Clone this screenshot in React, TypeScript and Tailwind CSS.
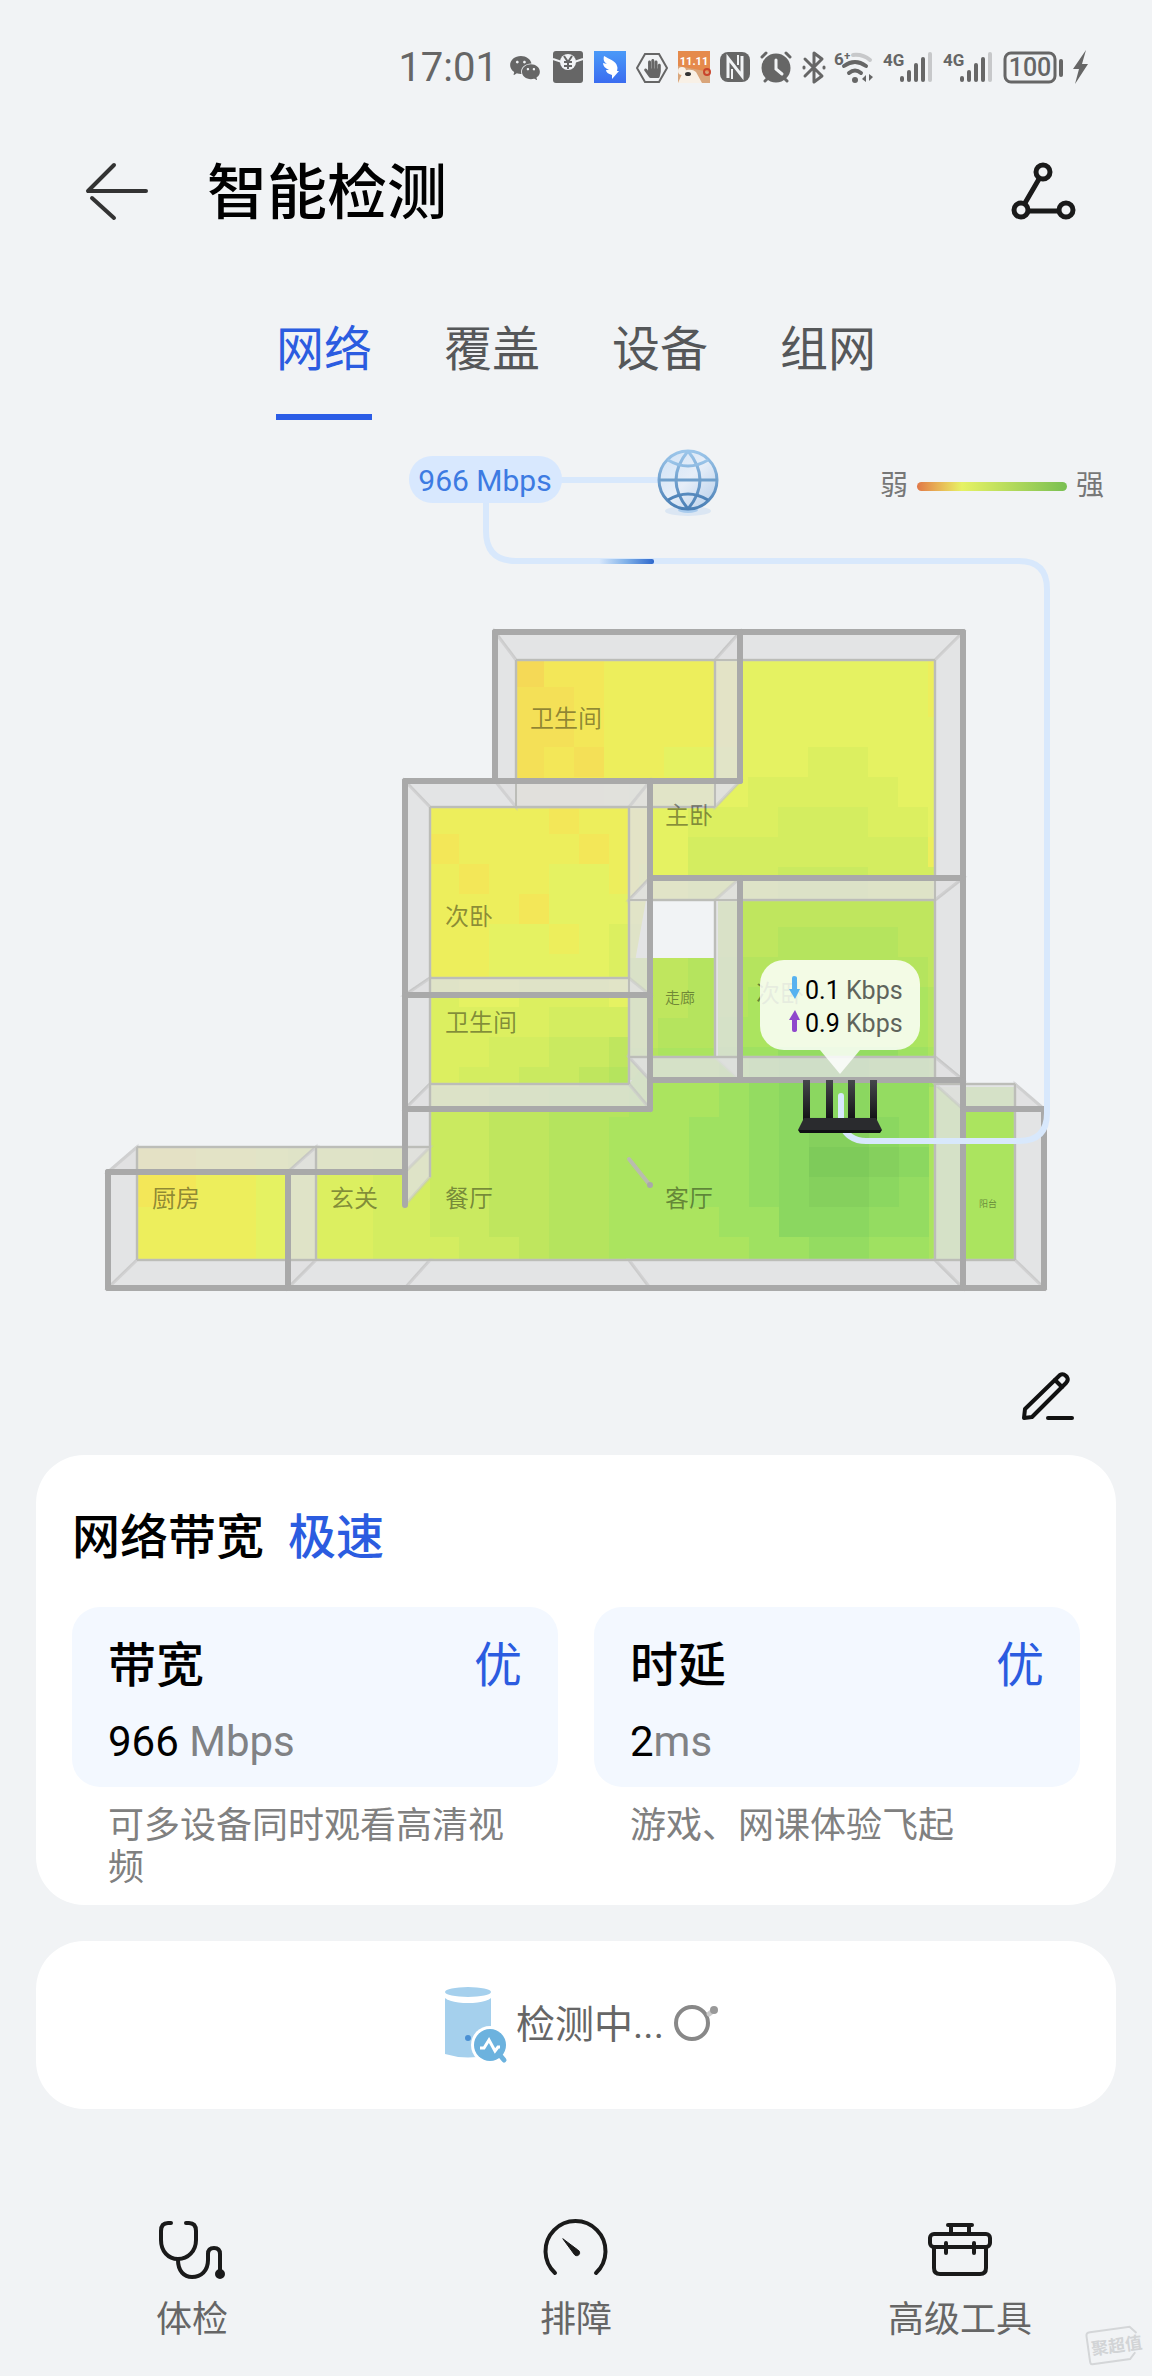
import React, { useState } from "react";
import { AiFillWechat } from "react-icons/ai";
import { FaHandPaper } from "react-icons/fa";

// Signal levels, weakest to strongest
const LEVELS: Record<string, string> = {
  "0": "#f5d956",
  "1": "#f4e057",
  "2": "#f3e758",
  "3": "#edee5c",
  "4": "#e5f262",
  "5": "#dcef60",
  "6": "#d4ed60",
  "7": "#caea60",
  "8": "#bfe65e",
  "9": "#b5e45e",
  a: "#abe45f",
  b: "#9fe161",
  c: "#94dc61",
  d: "#8bd760",
  e: "#85d05d",
  f: "#7ecb5a",
};

const CELL = 30;

// Each room has its own sampling grid, cut to the outline of its floor
const rooms = [
  {
    id: "bath-top",
    outline: "516,660 740,660 740,807 516,807",
    x: 514,
    y: 657,
    rows: ["02233333", "11233333", "11233333", "12133444", "12233344", "12233344"],
  },
  {
    id: "master",
    outline: "740,660 935,660 935,900 629,900 629,781 740,781",
    x: 628,
    y: 657,
    rows: [
      "44444444443",
      "44444444443",
      "44444444444",
      "44444455444",
      "44445555544",
      "44555666554",
      "44666666663",
      "44666777666",
      "44666777666",
    ],
  },
  {
    id: "bedroom-left",
    outline: "430,807 629,807 650,781 650,878 629,995 430,995",
    x: 429,
    y: 774,
    rows: ["33332333", "33332333", "23333233", "32334434", "33324444", "33443455", "33444455", "23334555"],
  },
  {
    id: "bath-left",
    outline: "430,978 629,978 629,1109 430,1109",
    x: 429,
    y: 977,
    rows: ["5445554", "5555666", "5566778", "5667789", "6778899"],
  },
  {
    id: "corridor",
    outline: "629,958 715,958 715,1080 629,1080",
    x: 628,
    y: 958,
    rows: ["889", "889", "899", "9aa", "aaa"],
  },
  {
    id: "bedroom-right",
    outline: "715,900 935,900 935,1080 715,1080",
    x: 718,
    y: 867,
    rows: ["88888888", "88888888", "88999988", "99999998", "9aaaaaa9", "aaaaaaa9", "bbccccba", "bbccccba"],
  },
  {
    id: "entrance",
    outline: "288,1147 430,1147 430,1260 288,1260",
    x: 283,
    y: 1147,
    rows: ["55566", "55566", "55566", "55566"],
  },
  {
    id: "kitchen",
    outline: "137,1147 288,1147 288,1260 137,1260",
    x: 136,
    y: 1147,
    rows: ["223344", "223344", "333344", "333344"],
  },
  {
    id: "dining",
    outline: "430,1084 629,1084 629,1260 430,1260",
    x: 429,
    y: 1087,
    rows: ["7788999", "778899a", "778899a", "778899a", "778899a", "677899a"],
  },
  {
    id: "living",
    outline: "629,1084 650,1057 935,1057 935,1260 629,1260",
    x: 629,
    y: 1057,
    rows: [
      "aaabcdddccb",
      "aaabcdddcca",
      "aabbcdeedca",
      "aabbcdffeda",
      "aabbcdeedca",
      "aaabbdddcca",
      "aaaabbccbba",
    ],
  },
  {
    id: "living-right",
    outline: "935,1084 963,1084 963,1260 935,1260",
    x: 935,
    y: 1087,
    rows: ["a", "a", "a", "a", "a", "a"],
  },
  {
    id: "balcony",
    outline: "963,1084 1015,1084 1015,1260 963,1260",
    x: 928,
    y: 1087,
    rows: ["aaa99", "aaa99", "aaa99", "aaa99", "aaaaa", "aaaaa"],
  },
];

// Where the top edge of a wall meets the floor, per axis
const FOOT_X: Record<number, number> = {
  108: 137, 288: 316, 405: 430, 495: 516, 650: 629, 740: 715, 963: 935, 1044: 1015,
};
const FOOT_Y: Record<number, number> = {
  632: 660, 781: 807, 878: 900, 995: 978, 1080: 1057, 1109: 1084, 1172: 1147, 1205: 1177, 1288: 1260,
};

const walls = [
  [495, 632, 740, 632],
  [740, 632, 963, 632],
  [495, 632, 495, 781],
  [740, 632, 740, 781],
  [963, 632, 963, 878],
  [963, 878, 963, 1080],
  [405, 781, 650, 781],
  [495, 781, 740, 781],
  [405, 781, 405, 995],
  [650, 781, 650, 878],
  [650, 878, 963, 878],
  [650, 878, 650, 1080],
  [650, 1080, 650, 1109],
  [740, 878, 740, 1080],
  [405, 995, 650, 995],
  [405, 995, 405, 1109],
  [650, 1080, 963, 1080],
  [405, 1109, 650, 1109],
  [405, 1109, 405, 1205],
  [963, 1080, 963, 1288],
  [963, 1109, 1044, 1109],
  [1044, 1109, 1044, 1288],
  [108, 1172, 288, 1172],
  [288, 1172, 405, 1172],
  [108, 1172, 108, 1288],
  [288, 1172, 288, 1288],
  [108, 1288, 288, 1288],
  [288, 1288, 405, 1288],
  [405, 1288, 650, 1288],
  [650, 1288, 963, 1288],
  [963, 1288, 1044, 1288],
];

const roomLabels = [
  { text: "卫生间", x: 530, y: 727, size: 24 },
  { text: "主卧", x: 665, y: 824, size: 24 },
  { text: "次卧", x: 445, y: 925, size: 24 },
  { text: "卫生间", x: 445, y: 1031, size: 24 },
  { text: "走廊", x: 665, y: 1003, size: 15 },
  { text: "次卧", x: 756, y: 1002, size: 24 },
  { text: "厨房", x: 152, y: 1207, size: 24 },
  { text: "玄关", x: 330, y: 1207, size: 24 },
  { text: "餐厅", x: 445, y: 1207, size: 24 },
  { text: "客厅", x: 665, y: 1207, size: 24 },
  { text: "阳台", x: 979, y: 1207, size: 9 },
];

const tabs = ["网络", "覆盖", "设备", "组网"];

function SignalBars() {
  return (
    <svg className="overflow-visible" width="50" height="36" viewBox="0 0 50 36" fill="currentColor">
      <text x="0" y="16" fontSize="17" fontWeight="700">
        4G
      </text>
      <rect x="17" y="26" width="4" height="6" rx="2" />
      <rect x="24" y="20" width="4" height="12" rx="2" />
      <rect x="31" y="13" width="4" height="19" rx="2" />
      <rect x="38" y="7" width="4" height="25" rx="2" />
      <rect x="45" y="2" width="4" height="30" rx="2" opacity="0.3" />
    </svg>
  );
}

function StatusBar() {
  return (
    <div className="flex h-[136px] items-center justify-end gap-[10px] pr-16 text-[#666]">
      <span className="text-[40px] leading-none">17:01</span>
      <AiFillWechat size={34} />
      <svg width="32" height="36" viewBox="0 0 32 36">
        <rect x="1" y="1" width="30" height="32" rx="3" fill="#666" />
        <path d="M1 9 L10 12 A7 7 0 0 0 22 12 L31 9" fill="none" stroke="#f1f3f5" strokeWidth="2" />
        <circle cx="16" cy="12" r="8" fill="#f1f3f5" />
        <path d="M12 6 L16 12 L20 6 M16 12 V19 M12 12 H20 M12 16 H20" stroke="#666" strokeWidth="2" fill="none" />
      </svg>
      <svg width="32" height="36" viewBox="0 0 32 36">
        <defs>
          <linearGradient id="bird" x1="0" y1="0" x2="0" y2="1">
            <stop offset="0" stopColor="#4a9af8" />
            <stop offset="1" stopColor="#3a6cf0" />
          </linearGradient>
        </defs>
        <rect y="1" width="32" height="32" fill="url(#bird)" />
        <path d="M10 6 C15 9 22 11 23 16 C24 18 23 20 23 21 H25 L18 29 L18 25 C14 24 12 22 12 20 H15 C11 18 9 16 9 13 L13 14 C10 12 9 10 10 6 Z" fill="#fff" />
      </svg>
      <span className="relative flex size-8 items-center justify-center">
        <svg className="absolute inset-0" width="32" height="32" viewBox="0 0 32 32">
          <path d="M9 2 H23 L31 16 L23 30 H9 L1 16 Z" fill="none" stroke="currentColor" strokeWidth="2" />
        </svg>
        <FaHandPaper size={19} />
      </span>
      <svg className="overflow-visible" width="32" height="36" viewBox="0 0 32 36">
        <rect y="1" width="32" height="32" fill="#e58a4c" />
        <path d="M0 33 V16 L32 22 V33 Z" fill="#d9a57a" />
        <text x="16" y="15" textAnchor="middle" fontSize="11" fontWeight="700" fill="#fff">
          11.11
        </text>
        <path d="M0 33 L4 24 A8 6 0 0 1 18 22 L24 33 Z" fill="#f8f0e6" />
        <circle cx="4" cy="21" r="4" fill="#f8f0e6" />
        <ellipse cx="10" cy="24" rx="3" ry="2" fill="#333" />
        <circle cx="29" cy="22" r="3" fill="none" stroke="#c9452c" strokeWidth="2" />
      </svg>
      <svg width="30" height="36" viewBox="0 0 30 36">
        <rect y="2" width="30" height="30" rx="8" fill="#666" />
        <path d="M8 28 V8 L22 26 V6" fill="none" stroke="#f1f3f5" strokeWidth="3" />
        <path d="M12 19 V29 M18 5 V15" stroke="#f1f3f5" strokeWidth="2" />
      </svg>
      <svg width="32" height="36" viewBox="0 0 32 36" fill="none" stroke="#666" strokeWidth="3" strokeLinecap="round">
        <circle cx="16" cy="18" r="13" fill="#666" />
        <path d="M2 7 L6 3 M30 7 L26 3 M5 31 L8 28 M27 31 L24 28" />
        <path d="M16 10 V19 L22 24" stroke="#f1f3f5" />
      </svg>
      <svg width="24" height="36" viewBox="0 0 24 36" fill="none" stroke="#666" strokeWidth="3" strokeLinejoin="round" strokeLinecap="round">
        <path d="M3 9 L20 26 L12 32 V3 L20 9 L3 26" />
        <path d="M2 17 V18 M22 17 V18" />
      </svg>
      <svg className="overflow-visible" width="37" height="36" viewBox="0 0 37 36" fill="none" stroke="#666" strokeWidth="4" strokeLinecap="round">
        <text x="-2" y="15" fontSize="17" fontWeight="700" fill="#666" stroke="none">
          6⁺
        </text>
        <path d="M17 5 Q27 4 34 10" opacity="0.3" />
        <path d="M8 16 Q19 8 30 16" />
        <path d="M13 23 Q19 18 25 23" />
        <circle cx="19" cy="30" r="3" fill="#666" stroke="none" />
        <path d="M30 25 V32 L26 29 Z M33 24 V31 L37 27 Z" fill="#666" stroke="none" />
      </svg>
      <SignalBars />
      <SignalBars />
      <svg width="60" height="36" viewBox="0 0 60 36" fill="none" stroke="#666">
        <rect x="2" y="3" width="50" height="29" rx="6" strokeWidth="3" />
        <path d="M58 11 V25" strokeWidth="4" strokeLinecap="round" />
        <text x="27" y="26" textAnchor="middle" fontSize="25" fontWeight="500" fill="#666" stroke="none">
          100
        </text>
      </svg>
      <svg width="15" height="36" viewBox="0 0 15 36" fill="#666">
        <path d="M13 0 L0 19 H6 L2 34 L15 14 H9 Z" />
      </svg>
    </div>
  );
}

function Router() {
  return (
    <g>
      {[803, 826, 848, 870].map((x) => (
        <rect key={x} x={x} y="1080" width="7" height="40" fill="url(#antenna)" />
      ))}
      <path d="M804 1118 H876 L882 1130 H798 Z" fill="#2a2b2e" />
      <path d="M798 1130 H882 L880 1133 H800 Z" fill="#101113" />
    </g>
  );
}

function FloorPlan() {
  return (
    <svg viewBox="0 420 1152 900" className="block w-full" role="img" aria-label="户型图">
      <defs>
        <linearGradient id="globe" x1="0" y1="0" x2="0" y2="1">
          <stop offset="0" stopColor="#9cc6ea" />
          <stop offset="1" stopColor="#4a7fb5" />
        </linearGradient>
        <linearGradient id="globeFill" x1="0" y1="0" x2="1" y2="1">
          <stop offset="0" stopColor="#cfe2f6" />
          <stop offset="0.5" stopColor="#e6eef8" />
          <stop offset="1" stopColor="#b4cdea" />
        </linearGradient>
        <linearGradient id="pulse">
          <stop offset="0" stopColor="#d8e8fc" />
          <stop offset="0.5" stopColor="#7fb0e8" />
          <stop offset="1" stopColor="#2f68cc" />
        </linearGradient>
        <linearGradient id="antenna" x1="0" y1="0" x2="0" y2="1">
          <stop offset="0" stopColor="#45474b" />
          <stop offset="1" stopColor="#121315" />
        </linearGradient>
        {rooms.map((room) => (
          <clipPath key={room.id} id={room.id}>
            <polygon points={room.outline} />
          </clipPath>
        ))}
      </defs>

      {/* Heat map */}
      {rooms.map((room) => (
        <g key={room.id} clipPath={`url(#${room.id})`} shapeRendering="crispEdges">
          {room.rows.map((row, r) =>
            row.split("").map((level, c) => (
              <rect
                key={`${r}-${c}`}
                x={room.x + c * CELL}
                y={room.y + r * CELL}
                width={CELL}
                height={CELL}
                fill={LEVELS[level]}
              />
            ))
          )}
        </g>
      ))}

      {/* Wall sides */}
      <g fill="#e0e0e1" fillOpacity="0.8" stroke="#c4c4c4" strokeWidth="3" strokeOpacity="0.5">
        {walls.map(([x1, y1, x2, y2]) => (
          <polygon
            key={`${x1}-${y1}-${x2}-${y2}`}
            points={`${x1},${y1} ${x2},${y2} ${FOOT_X[x2]},${FOOT_Y[y2]} ${FOOT_X[x1]},${FOOT_Y[y1]}`}
          />
        ))}
      </g>
      <g stroke="#bcbdb8" strokeWidth="2" fill="none">
        {walls.map(([x1, y1, x2, y2]) => (
          <path key={`${x1}-${y1}-${x2}-${y2}`} d={`M${FOOT_X[x1]} ${FOOT_Y[y1]} L${FOOT_X[x2]} ${FOOT_Y[y2]}`} />
        ))}
      </g>

      {/* Room names */}
      {roomLabels.map((label) => (
        <text key={`${label.text}-${label.x}-${label.y}`} x={label.x} y={label.y} fontSize={label.size} fill="#000" fillOpacity="0.42">
          {label.text}
        </text>
      ))}

      {/* Wall tops */}
      <g stroke="#a9a9a9" strokeWidth="6" strokeLinecap="round">
        {walls.map(([x1, y1, x2, y2]) => (
          <path key={`${x1}-${y1}-${x2}-${y2}`} d={`M${x1} ${y1} L${x2} ${y2}`} />
        ))}
      </g>
      <path d="M629 1159 L649 1184" stroke="#b9bcae" strokeWidth="4" strokeLinecap="round" />
      <circle cx="650" cy="1185" r="3" fill="#a9a9a9" />

      {/* Link from the internet down to the router */}
      <g fill="none" stroke="#d8e8fc" strokeWidth="6" strokeLinecap="round">
        <path d="M560 480 H658" />
        <path d="M486 500 V531 Q486 561 516 561 H1019 Q1047 561 1047 589 V1113 Q1047 1141 1019 1141 H866 Q848 1141 841 1124 V1096" />
      </g>
      <rect x="599" y="559" width="55" height="5" rx="2" fill="url(#pulse)" />
      <rect x="409" y="456" width="153" height="47" rx="23" fill="#d8e8fe" />
      <text x="485" y="491" textAnchor="middle" fontSize="30" fill="#3d7be2">
        966 Mbps
      </text>

      <ellipse cx="688" cy="511" rx="23" ry="5" fill="#dbe6f3" />
      <ellipse cx="688" cy="510" rx="10" ry="3" fill="#a9cbed" />
      <g fill="none" stroke="url(#globe)" strokeWidth="3">
        <circle cx="688" cy="480" r="29" fill="url(#globeFill)" />
        <path d="M688 451 Q664 480 688 509 M688 451 Q712 480 688 509" />
        <path d="M668 460 Q688 472 708 460 M668 500 Q688 488 708 500" />
      </g>
      <path d="M659 480 H717" stroke="#6f9fcb" strokeWidth="3" />

      <Router />

      {/* Router traffic */}
      <rect x="760" y="960" width="160" height="90" rx="24" fill="#fff" fillOpacity="0.84" />
      <path d="M820 1050 H860 L840 1074 Z" fill="#fff" fillOpacity="0.84" />
      <path d="M792 978 Q792 976 794 976 Q797 976 797 978 V989 H800 L795 999 L789 989 H792 Z" fill="#56b2f0" />
      <path d="M792 1030 Q792 1032 794 1032 Q797 1032 797 1030 V1020 H800 L795 1010 L789 1020 H792 Z" fill="#8f48cc" />
      <g fontSize="25" fill="#5f645c">
        <text x="805" y="999">
          <tspan fill="#000">0.1</tspan> Kbps
        </text>
        <text x="805" y="1032">
          <tspan fill="#000">0.9</tspan> Kbps
        </text>
      </g>
    </svg>
  );
}

interface MetricCardProps {
  title: string;
  grade: string;
  value: string;
  unit: string;
  note: string;
}

function MetricCard({ title, grade, value, unit, note }: MetricCardProps) {
  return (
    <div>
      <div className="h-[180px] rounded-[28px] bg-[#f3f8ff] px-9 pt-[23px]">
        <div className="flex justify-between text-[48px] leading-[72px]">
          <h3 className="font-medium text-black">{title}</h3>
          <span className="text-[#2b5ce0]">{grade}</span>
        </div>
        <p className="mt-[10px] whitespace-pre text-[42px] leading-[60px] text-[#808285]">
          <span className="text-black">{value}</span>
          {unit}
        </p>
      </div>
      <p className="mt-[18px] px-9 text-[36px] leading-[42px] text-[#808080]">{note}</p>
    </div>
  );
}

export default function App() {
  const [activeTab, setActiveTab] = useState("网络");

  return (
    <div className="relative flex min-h-screen flex-col bg-[#f1f3f5] font-[Roboto,'Noto_Sans_CJK_SC',sans-serif]">
      <StatusBar />

      <header className="flex h-[116px] items-center px-[76px]">
        <button aria-label="返回">
          <svg width="80" height="80" viewBox="76 154 80 80" fill="none" stroke="#333" strokeWidth="4" strokeLinecap="round" strokeLinejoin="round">
            <path d="M114 165 L88 191 H146" />
            <path d="M92 198 L114 218" />
          </svg>
        </button>
        <h1 className="ml-[51px] flex-1 text-[60px] font-medium leading-[88px] text-black">智能检测</h1>
        <button aria-label="拓扑">
          <svg width="66" height="66" viewBox="1010 161 66 66" fill="none" stroke="#1a1a1a" strokeWidth="5">
            <circle cx="1043" cy="172" r="7" />
            <circle cx="1021" cy="210" r="7" />
            <circle cx="1066" cy="210" r="7" />
            <path d="M1039 179 L1025 203 M1029 211 H1058" />
          </svg>
        </button>
      </header>

      <div role="tablist" className="flex justify-center gap-[72px] pt-[62px]">
        {tabs.map((tab) => (
          <button
            key={tab}
            role="tab"
            aria-selected={activeTab === tab}
            onClick={() => setActiveTab(tab)}
            className={`border-b-6 pb-7 text-[48px] leading-[72px] ${
              activeTab === tab ? "border-[#2b5ce6] text-[#2b5ce0]" : "border-transparent text-[#555759]"
            }`}
          >
            {tab}
          </button>
        ))}
      </div>

      <main className="px-9">
        <section className="relative -mx-9">
          <FloorPlan />
          <div className="absolute right-12 top-[46px] flex items-center gap-[9px] text-[28px] leading-10 text-[#777]">
            <span>弱</span>
            <span className="h-[9px] w-[150px] rounded-full bg-linear-to-r from-[#e07848] via-[#e6f264] via-30% to-[#78bf52]" />
            <span>强</span>
          </div>
        </section>

        <div className="flex h-[135px] items-center justify-end pr-9 pt-4">
          <button aria-label="编辑">
            <svg width="64" height="64" viewBox="1016 1364 64 64" fill="none" stroke="#111" strokeWidth="4" strokeLinecap="round" strokeLinejoin="round">
              <path d="M1024 1418 L1025 1409 L1060 1375 Q1063 1373 1066 1376 L1067 1377 Q1069 1380 1066 1383 L1032 1417 Z" />
              <path d="M1055 1380 L1062 1387" />
              <path d="M1048 1418 H1072" />
            </svg>
          </button>
        </div>

        <section className="rounded-[48px] bg-white px-9 pb-4 pt-[47px]">
          <h2 className="flex gap-6 text-[48px] font-medium leading-[72px] text-black">
            <span>网络带宽</span>
            <span className="text-[#2b5ce0]">极速</span>
          </h2>
          <div className="mt-[33px] grid grid-cols-2 gap-9">
            <MetricCard title="带宽" grade="优" value="966" unit=" Mbps" note="可多设备同时观看高清视频" />
            <MetricCard title="时延" grade="优" value="2" unit="ms" note="游戏、网课体验飞起" />
          </div>
        </section>

        <section className="mt-9 flex h-[168px] items-center justify-center rounded-[48px] bg-white pl-3 text-[39px] text-[#666]">
          <svg width="64" height="78" viewBox="445 1986 64 78">
            <path d="M446 1996 H492 V2054 Q469 2061 446 2054 Z" fill="#a5d0ed" />
            <ellipse cx="469" cy="1995" rx="25" ry="8" fill="#fff" />
            <ellipse cx="469" cy="1992" rx="23" ry="5" fill="#a5d0ed" />
            <circle cx="469" cy="2038" r="3" fill="#4a90d4" />
            <circle cx="491" cy="2045" r="19" fill="#fff" />
            <circle cx="491" cy="2045" r="16" fill="#6cb2de" />
            <path d="M500 2054 L505 2060" stroke="#6cb2de" strokeWidth="5" strokeLinecap="round" />
            <path d="M481 2048 H485 L490 2040 L496 2051 L499 2047 H501" fill="none" stroke="#fff" strokeWidth="3" />
          </svg>
          <span className="ml-2">检测中...</span>
          <svg className="ml-2" width="48" height="40" viewBox="670 2005 48 40">
            <circle cx="690" cy="2023" r="16" fill="none" stroke="#888" strokeWidth="4" />
            <path d="M707 2014 L712 2010" stroke="#ccc" strokeWidth="5" strokeLinecap="round" />
            <circle cx="712" cy="2010" r="4" fill="#999" />
          </svg>
        </section>
      </main>

      <nav className="mt-[107px] grid grid-cols-3 text-[36px] leading-[54px] text-[#666]">
        <button className="flex flex-col items-center gap-[13px]">
          <svg width="68" height="64" viewBox="158 2218 68 64" fill="none" stroke="#1a1a1a" strokeWidth="4" strokeLinecap="round">
            <path d="M171 2225 H168 Q161 2225 161 2233 V2242 C161 2253 168 2261 178 2261 C188 2261 196 2253 196 2242 V2233 Q196 2225 189 2225 H186" />
            <path d="M178 2262 C178 2273 184 2279 192 2279 C201 2279 208 2273 208 2262 V2256 Q208 2250 214 2250 Q220 2250 220 2256 V2274" />
            <circle cx="220" cy="2276" r="3" fill="#1a1a1a" />
          </svg>
          体检
        </button>
        <button className="flex flex-col items-center gap-[13px]">
          <svg width="68" height="64" viewBox="542 2216 68 64" fill="none" stroke="#1a1a1a" strokeWidth="4" strokeLinecap="round">
            <path d="M555 2273 A30 30 0 1 1 596 2273" />
            <path d="M563 2239 L574 2254 A3 3 0 1 0 578 2250 Z" fill="#1a1a1a" strokeWidth="1" />
          </svg>
          排障
        </button>
        <button className="flex flex-col items-center gap-[13px]">
          <svg width="68" height="64" viewBox="926 2216 68 64" fill="none" stroke="#1a1a1a" strokeWidth="4" strokeLinecap="round">
            <rect x="930" y="2234" width="60" height="13" rx="4" />
            <path d="M934 2247 V2268 Q934 2274 940 2274 H980 Q986 2274 986 2268 V2247" />
            <path d="M948 2225 H972 M951 2225 V2233 M969 2225 V2233 M946 2243 V2253 M974 2243 V2253" />
          </svg>
          高级工具
        </button>
      </nav>

      <svg className="absolute bottom-2 right-2 overflow-visible" width="58" height="46" viewBox="0 0 58 46">
        <g transform="rotate(-8 29 23)">
          <path d="M6 7 H46 L52 14 M48 33 L42 39 H4 Q2 39 2 36 V10 Q2 7 6 7" fill="none" stroke="#d4d6d8" strokeWidth="2" />
          <text x="5" y="30" fontSize="17" fontWeight="700" fill="#d2d4d6">
            聚超值
          </text>
        </g>
      </svg>
    </div>
  );
}
